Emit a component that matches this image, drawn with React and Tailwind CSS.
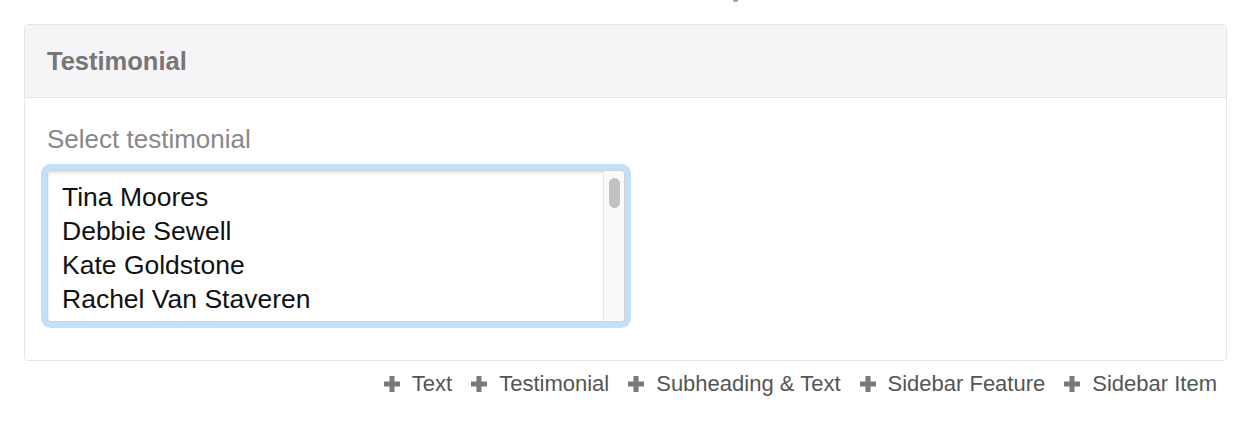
import React from "react";

function PlusIcon() {
  return (
    <svg width="16" height="16" viewBox="0 0 16 16" className="shrink-0">
      <rect x="0" y="5.5" width="16" height="5" fill="#7a7a7a" />
      <rect x="5.5" y="0" width="5" height="16" fill="#7a7a7a" />
    </svg>
  );
}

const items = ["Text", "Testimonial", "Subheading & Text", "Sidebar Feature", "Sidebar Item"];
const people = ["Tina Moores", "Debbie Sewell", "Kate Goldstone", "Rachel Van Staveren"];

export default function App() {
  return (
    <div className="w-[1246px] h-[426px] bg-white font-['Liberation_Sans',Arial,sans-serif] overflow-hidden">
      <div className="h-[24px] pl-[733px]">
        <div className="w-[5px] h-[2px] bg-[#999] rounded-b-sm" />
      </div>
      <div className="ml-[24px] w-[1203px] border border-[#e6e6e6] rounded-[4px]">
        <div className="h-[73px] bg-[#f5f5f7] border-b border-[#e6e6e6] rounded-t-[4px] flex items-center px-[22px] text-[25.5px] font-bold text-[#777]">
          Testimonial
        </div>
        <div className="pt-[26px] pb-[38px] px-[22px]">
          <div className="text-[26px] leading-[30px] text-[#888]">Select testimonial</div>
          <div className="mt-[16px] w-[578px] h-[152px] border border-[#d2d2d2] rounded-[4px] bg-white flex overflow-hidden shadow-[inset_0_2px_3px_rgba(0,0,0,0.12),0_0_0_6px_#c3dffa]">
            <div className="flex-1 pl-[14px] pt-[9px] text-[26.5px] leading-[34px] text-[#111]">
              {people.map((p) => (
                <div key={p}>{p}</div>
              ))}
            </div>
            <div className="w-[21px] border-l border-[#e6e6e6] bg-[#fafafa] flex justify-center">
              <div className="mt-[7px] w-[11px] h-[30px] rounded-full bg-[#c1c1c1]" />
            </div>
          </div>
        </div>
      </div>
      <div className="ml-[24px] w-[1203px] pr-[10px] mt-[11px] flex justify-end gap-[19px] text-[22px] leading-[24px] text-[#555]">
        {items.map((t) => (
          <div key={t} className="flex items-center gap-[12px]">
            <PlusIcon />
            <span>{t}</span>
          </div>
        ))}
      </div>
    </div>
  );
}
